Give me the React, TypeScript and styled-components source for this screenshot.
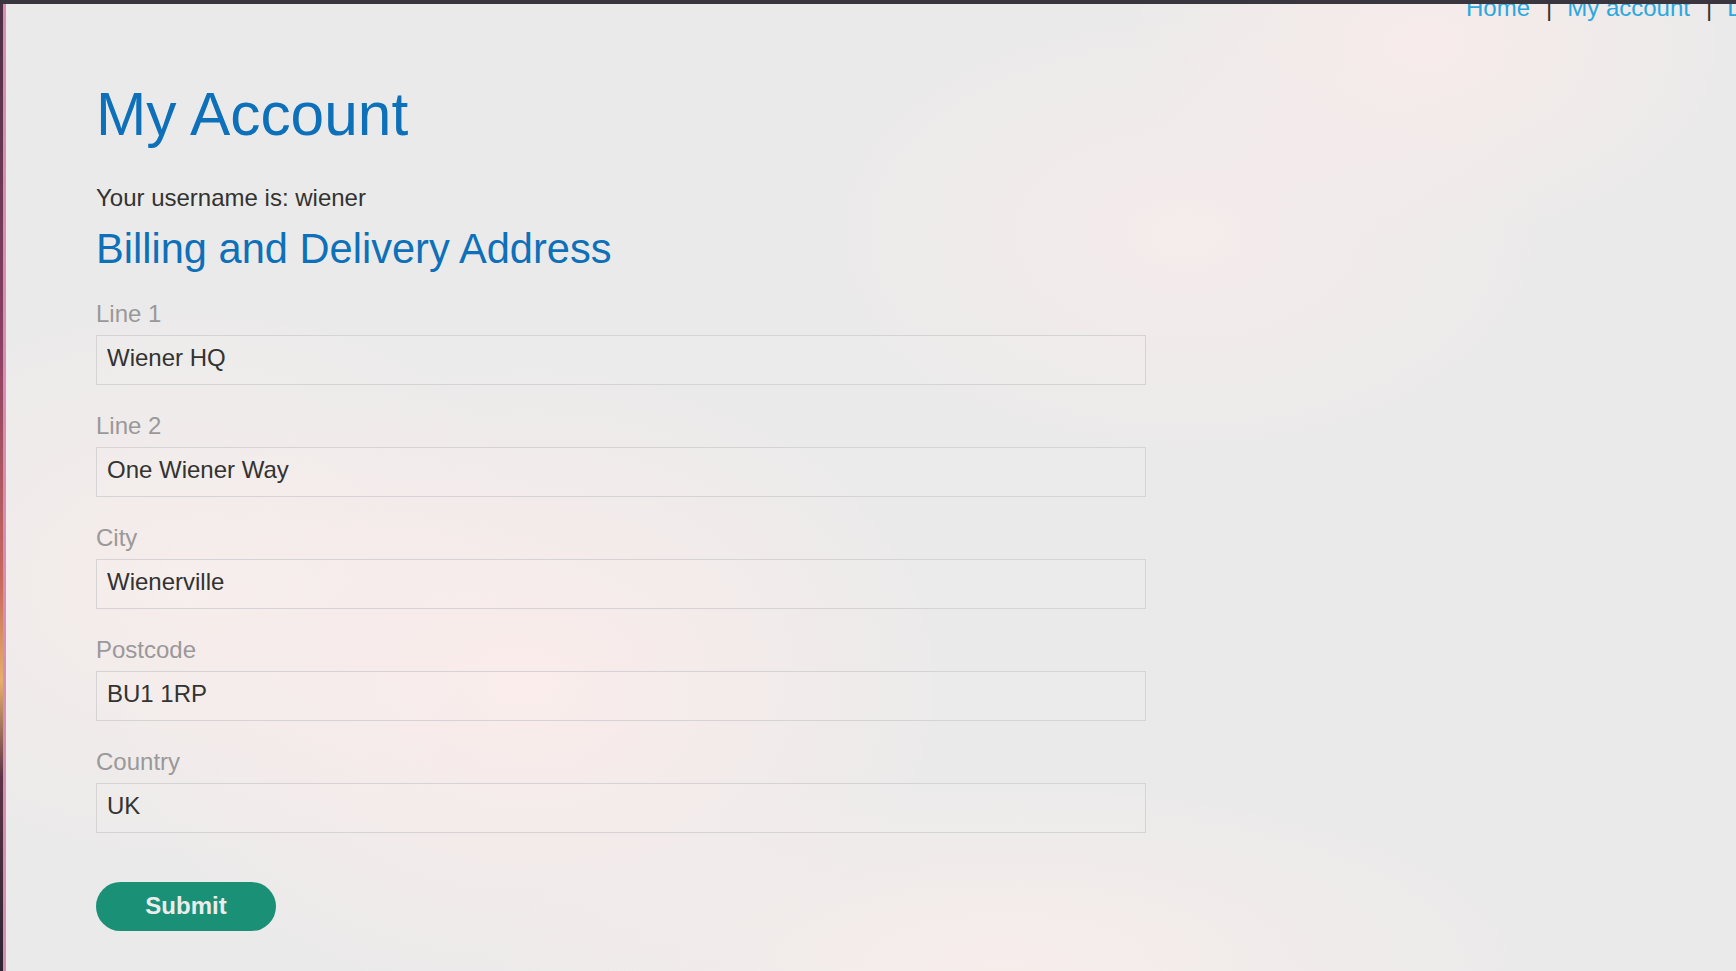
import styled, { createGlobalStyle } from 'styled-components';

const GlobalStyle = createGlobalStyle`
    html, body {
        margin: 0;
        padding: 0;
        overflow: hidden;
        background: #2d2a33;
    }
    * {
        box-sizing: border-box;
    }
`;

const fields = [
    { label: 'Line 1', value: 'Wiener HQ' },
    { label: 'Line 2', value: 'One Wiener Way' },
    { label: 'City', value: 'Wienerville' },
    { label: 'Postcode', value: 'BU1 1RP' },
    { label: 'Country', value: 'UK' },
];

const navLinks = ['Home', 'My account', 'Log out'];

const App = () => {
    return <Frame.Window>
        <GlobalStyle />
        <Frame.TopBar />
        <Frame.Body>
            <Frame.Edge />
            <Page.Root>
                <Page.Header>
                    {navLinks.map((link, i) => (
                        <Page.NavItem key={link}>
                            {i > 0 && <Page.Divider>|</Page.Divider>}
                            <Page.NavLink href="#">{link}</Page.NavLink>
                        </Page.NavItem>
                    ))}
                </Page.Header>
                <Page.Main>
                    <Page.Title>My Account</Page.Title>
                    <Page.Username>Your username is: wiener</Page.Username>
                    <Page.Subtitle>Billing and Delivery Address</Page.Subtitle>
                    <Form.Root onSubmit={(e) => e.preventDefault()}>
                        {fields.map((field) => (
                            <Form.Group key={field.label}>
                                <Form.Label>{field.label}</Form.Label>
                                <Form.Input defaultValue={field.value} />
                            </Form.Group>
                        ))}
                        <Form.Submit type="submit">Submit</Form.Submit>
                    </Form.Root>
                </Page.Main>
            </Page.Root>
        </Frame.Body>
    </Frame.Window>
};

export default App;

const Frame = {
    Window: styled.div`
        display: flex;
        flex-direction: column;
        width: 100vw;
        height: 100vh;
        overflow: hidden;
    `,
    TopBar: styled.div`
        height: 4px;
        flex-shrink: 0;
        background: #3a3640;
    `,
    Body: styled.div`
        display: flex;
        flex: 1;
        min-height: 0;
    `,
    Edge: styled.div`
        width: 6px;
        flex-shrink: 0;
        border-right: 3px solid #d98db3;
        background: linear-gradient(
            180deg,
            #4a3043 0%,
            #8a3f63 35%,
            #c86a5c 60%,
            #e6b06a 70%,
            #5a3446 80%,
            #2c2630 100%
        );
    `,
}

const Page = {
    Root: styled.div`
        flex: 1;
        overflow: hidden;
        font-family: "Liberation Sans", Arial, Helvetica, sans-serif;
        color: #333332;
        background:
            radial-gradient(ellipse 420px 320px at 520px 680px, rgba(252, 236, 234, 0.9), rgba(252, 236, 234, 0) 100%),
            radial-gradient(ellipse 380px 280px at 180px 580px, rgba(250, 238, 236, 0.75), rgba(250, 238, 236, 0) 100%),
            radial-gradient(ellipse 360px 220px at 1180px 230px, rgba(248, 236, 236, 0.8), rgba(248, 236, 236, 0) 100%),
            radial-gradient(ellipse 300px 200px at 1420px 40px, rgba(250, 236, 234, 0.8), rgba(250, 236, 234, 0) 100%),
            radial-gradient(ellipse 520px 180px at 1000px 960px, rgba(250, 238, 236, 0.8), rgba(250, 238, 236, 0) 100%),
            #ebeaea;
    `,
    Header: styled.nav`
        display: flex;
        height: 28px;
        margin-top: -10px;
        padding-left: 1460px;
        white-space: nowrap;
        font-size: 24px;
        line-height: 28px;
    `,
    NavItem: styled.span`
        display: flex;
        flex-shrink: 0;
    `,
    Divider: styled.span`
        color: #333332;
        margin: 0 15px 0 16px;
    `,
    NavLink: styled.a`
        color: #29a8df;
        text-decoration: none;
    `,
    Main: styled.main`
        display: flex;
        flex-direction: column;
        align-items: flex-start;
        padding-left: 90px;
    `,
    Title: styled.h1`
        margin: 58px 0 0;
        font-size: 60.4px;
        line-height: 69px;
        font-weight: 400;
        color: #0d70b8;
    `,
    Username: styled.p`
        margin: 35px 0 0;
        font-size: 24px;
        line-height: 28px;
    `,
    Subtitle: styled.h2`
        margin: 13px 0 0;
        font-size: 41.6px;
        line-height: 48px;
        font-weight: 400;
        color: #0d70b8;
    `,
}

const Form = {
    Root: styled.form`
        display: flex;
        flex-direction: column;
        gap: 27px;
        margin-top: 27px;
        width: 1050px;
    `,
    Group: styled.div`
        display: flex;
        flex-direction: column;
        gap: 7px;
    `,
    Label: styled.label`
        font-size: 24px;
        line-height: 28px;
        color: #9a9899;
    `,
    Input: styled.input`
        height: 50px;
        width: 100%;
        padding: 0 10px 5px;
        border: 1px solid #d6d3d4;
        background: rgba(255, 255, 255, 0.08);
        font-family: inherit;
        font-size: 24px;
        color: #333332;
        outline: none;
    `,
    Submit: styled.button`
        align-self: flex-start;
        width: 180px;
        height: 49px;
        margin-top: 22px;
        padding-bottom: 2px;
        border: none;
        border-radius: 25px;
        background: #1a9177;
        color: #ececec;
        font-family: inherit;
        font-size: 24px;
        font-weight: 700;
        cursor: pointer;
    `,
}
